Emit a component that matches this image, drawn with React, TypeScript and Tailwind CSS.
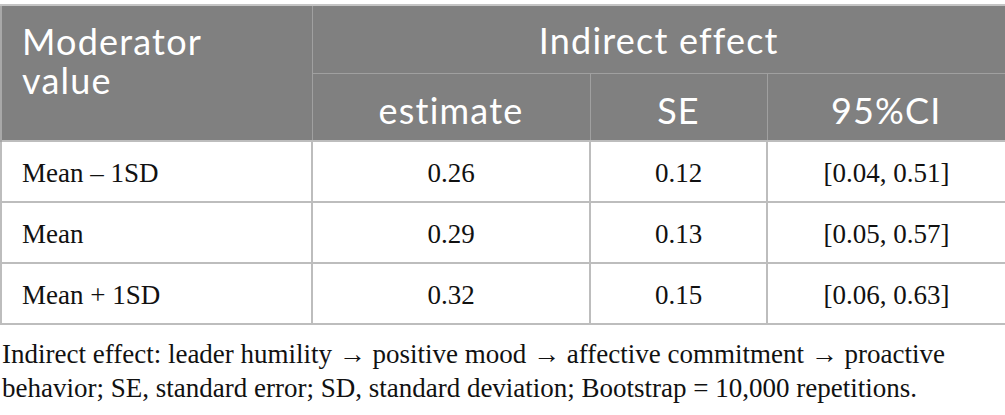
import React from 'react';

const rows = [
    { label: 'Mean – 1SD', estimate: '0.26', se: '0.12', ci: '[0.04, 0.51]' },
    { label: 'Mean', estimate: '0.29', se: '0.13', ci: '[0.05, 0.57]' },
    { label: 'Mean + 1SD', estimate: '0.32', se: '0.15', ci: '[0.06, 0.63]' },
];

const App: React.FC = () => {
    return (
        <div className="w-[1005px] h-[415px] bg-white pt-[4px] overflow-hidden">
            <table className="w-[1005px] border-collapse table-fixed">
                <colgroup>
                    <col className="w-[311px]" />
                    <col className="w-[278px]" />
                    <col className="w-[177px]" />
                    <col className="w-[239px]" />
                </colgroup>
                <thead className="bg-[#808080] text-white font-['Lato',sans-serif] text-[36px] leading-[39px] tracking-[1.2px] [font-variant-ligatures:none]">
                    <tr className="h-[68px]">
                        <th
                            rowSpan={2}
                            className="align-top text-left font-normal pl-[20px] pr-[60px] pt-[16px] border-t-2 border-t-[#c4c4c4] border-l-2 border-l-[#a8a8a8] border-r border-r-[#a0a0a0]"
                        >
                            Moderator value
                        </th>
                        <th
                            colSpan={3}
                            className="font-normal text-center pt-[2px] border-t-2 border-t-[#c4c4c4] border-b border-b-[#a0a0a0] border-r-2 border-r-[#a8a8a8]"
                        >
                            Indirect effect
                        </th>
                    </tr>
                    <tr className="h-[68px]">
                        <th className="font-normal text-center pt-[8px] border-r border-r-[#a0a0a0]">estimate</th>
                        <th className="font-normal text-center pt-[8px] border-r border-r-[#a0a0a0]">SE</th>
                        <th className="font-normal text-center pt-[8px] border-r-2 border-r-[#a8a8a8]">95%CI</th>
                    </tr>
                </thead>
                <tbody className="font-['Liberation_Serif',serif] text-[27px] text-[#111]">
                    {rows.map((r) => (
                        <tr key={r.label} className="h-[61px]">
                            <td className="pl-[20px] pt-[3px] border-2 border-[#bdbdbd]">{r.label}</td>
                            <td className="text-center pt-[3px] border-2 border-[#bdbdbd]">{r.estimate}</td>
                            <td className="text-center pt-[3px] border-2 border-[#bdbdbd]">{r.se}</td>
                            <td className="text-center pt-[3px] border-2 border-[#bdbdbd]">{r.ci}</td>
                        </tr>
                    ))}
                </tbody>
            </table>
            <p className="mt-[12px] pl-[2px] font-['Liberation_Serif',serif] text-[27px] leading-[34px] text-[#111] w-[990px]">
                Indirect effect: leader humility → positive mood → affective commitment → proactive behavior; SE,
                standard error; SD, standard deviation; Bootstrap = 10,000 repetitions.
            </p>
        </div>
    );
};

export default App;
